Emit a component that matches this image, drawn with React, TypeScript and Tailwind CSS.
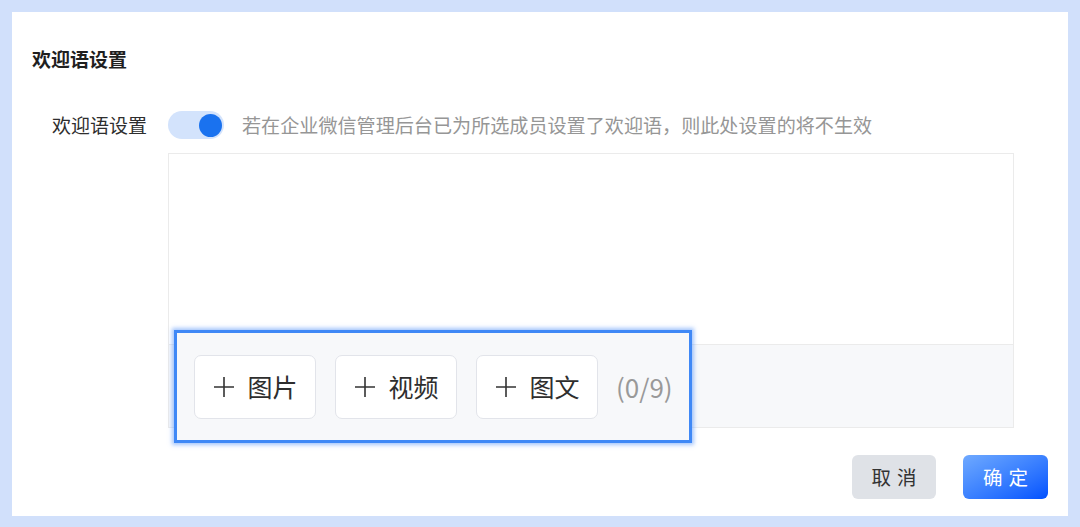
import React from "react";

const font = { fontFamily: '"Noto Sans CJK SC", "Noto Sans", sans-serif' };

function Plus() {
  return (
    <svg width="22" height="22" viewBox="0 0 22 22" className="shrink-0">
      <path d="M11 1V21M1 11H21" stroke="#333" strokeWidth="1.6" fill="none" />
    </svg>
  );
}

function AddButton({ label }: { label: string }) {
  return (
    <div className="flex h-[64px] w-[122px] items-center justify-center gap-[12px] rounded-[7px] border border-[#e2e4ea] bg-white pl-[1px] text-[25px] leading-none text-[#2e2e2e]">
      <Plus />
      <span>{label}</span>
    </div>
  );
}

export default function App() {
  return (
    <div className="h-[527px] w-[1080px] bg-[#d1e0fb] px-[12px] pt-[12px] pb-[11px]" style={font}>
      <div className="flex h-full flex-col bg-white pl-[20px] pr-[20px]">
        <div className="pt-[33px] text-[19px] font-bold leading-[28px] text-[#1f1f1f]">欢迎语设置</div>
        <div className="mt-[38px] flex">
          <div className="w-[136px] shrink-0 pr-[21px] text-right text-[19px] leading-[28px] text-[#2e2e2e]">欢迎语设置</div>
          <div className="flex flex-col">
            <div className="flex items-center">
              <div className="flex h-[28px] w-[56px] items-center justify-end rounded-full bg-[#d3e3fc] pr-[2px]">
                <div className="h-[23px] w-[23px] rounded-full bg-[#1a72ef]" />
              </div>
              <span className="ml-[18px] text-[19.1px] leading-[28px] text-[#969696]">
                若在企业微信管理后台已为所选成员设置了欢迎语，则此处设置的将不生效
              </span>
            </div>
            <div className="relative mt-[14px] flex h-[275px] w-[846px] flex-col border border-[#ebebeb]">
              <div className="h-[190px] bg-white" />
              <div className="flex-1 border-t border-[#ebebeb] bg-[#f7f8fa]" />
              <div className="absolute left-[5px] top-[176px] flex h-[113px] w-[518px] items-center gap-[19px] border-[3px] border-[#3f88f6] bg-[#f7f8fa] pl-[17px] shadow-[0_0_4px_2px_rgba(90,150,250,0.55)]">
                <AddButton label="图片" />
                <AddButton label="视频" />
                <AddButton label="图文" />
                <span className="-ml-[1px] text-[26px] leading-none text-[#999]">(0/9)</span>
              </div>
            </div>
          </div>
        </div>
        <div className="mt-[27px] flex justify-end gap-[27px]">
          <div className="flex h-[44px] w-[84px] items-center justify-center rounded-[6px] bg-[#dfe2e7] text-[19.5px] tracking-[6px] text-[#333] indent-[6px]">
            取消
          </div>
          <div className="flex h-[44px] w-[85px] items-center justify-center rounded-[6px] bg-linear-to-br from-[#6fa9ff] to-[#0050ff] text-[19.5px] tracking-[6px] text-white indent-[6px]">
            确定
          </div>
        </div>
      </div>
    </div>
  );
}
